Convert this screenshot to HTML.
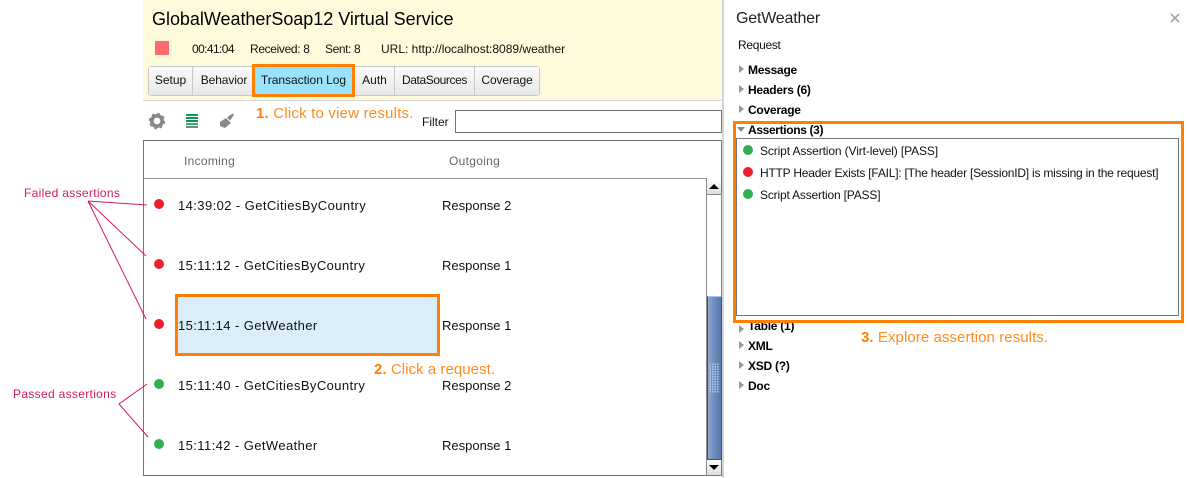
<!DOCTYPE html>
<html><head><meta charset="utf-8">
<style>
html,body{margin:0;padding:0;background:#fff}
#p{position:relative;width:1187px;height:478px;overflow:hidden;background:#fff;font-family:"Liberation Sans",sans-serif;font-size:12px;color:#111}
#p div,#p span.t{position:absolute;white-space:nowrap;box-sizing:border-box}
.t{line-height:16px}
.o{color:#ff8c1f;font-size:15px;line-height:18px}
.o b{color:#ff8000}
.r{font-size:13px;line-height:16px}
.l{letter-spacing:.41px}
.d{width:10px;height:10px;border-radius:50%}
.g{background:#2eb04e}.e{background:#ef2029}
.a{color:#d8195a;font-size:12px;line-height:16px;letter-spacing:.32px}
.h{font-weight:bold;font-size:12px;line-height:16px;color:#000;letter-spacing:-.25px}
.ar{width:0;height:0;border-left:5px solid #999;border-top:4px solid transparent;border-bottom:4px solid transparent}
.tab{top:67px;height:28px;line-height:27px;text-align:center;border-right:1px solid #c8c8c8;background:linear-gradient(#fbfbfb,#e8e8e8);font-size:12px}
</style></head>
<body><div id="p">
<div style="left:143px;top:0;width:579px;height:101px;background:#fefadc;border-bottom:1px solid #d8d8d0"></div>
<div style="left:722px;top:0;width:2px;height:478px;background:#d4d4d4"></div>
<div class="t" style="left:152px;top:8px;font-size:18px;line-height:22px;color:#000;letter-spacing:-.03px">GlobalWeatherSoap12 Virtual Service</div>
<div style="left:155px;top:41px;width:14px;height:14px;background:#ff6b6e"></div>
<div class="t" style="left:192px;top:41px;letter-spacing:-.6px">00:41:04</div>
<div class="t" style="left:250px;top:41px;letter-spacing:-.35px">Received: 8</div>
<div class="t" style="left:325px;top:41px;letter-spacing:-.4px">Sent: 8</div>
<div class="t" style="left:381px;top:41px">URL: http://localhost:8089/weather</div>

<div style="left:148px;top:66px;width:392px;height:30px;border:1px solid #c8c8c8;border-radius:3px;background:#eee"></div>
<div class="tab" style="left:149px;width:44px">Setup</div>
<div class="tab" style="left:194px;width:59px;letter-spacing:-.1px;padding-left:2px">Behavior</div>
<div class="tab" style="left:355px;width:40px">Auth</div>
<div class="tab" style="left:395px;width:80px;letter-spacing:-.4px">DataSources</div>
<div class="tab" style="left:475px;width:64px;border-right:0;letter-spacing:-.1px">Coverage</div>
<div style="left:252px;top:64px;width:103px;height:33px;background:#99e3ff;border:3px solid #ff8000;text-align:center;line-height:26px;font-size:12px;letter-spacing:-.03px">Transaction Log</div>

<svg style="position:absolute;left:148px;top:112px" width="90" height="20" viewBox="0 0 90 20">
<circle cx="9" cy="9" r="5.2" fill="none" stroke="#888" stroke-width="3.6"/>
<circle cx="9" cy="9" r="7" fill="none" stroke="#888" stroke-width="2.4" stroke-dasharray="2.6 2.9"/>
<rect x="38" y="2" width="12" height="2" fill="#0a9a50"/><rect x="38" y="5" width="12" height="2" fill="#0a9a50"/><rect x="38" y="8" width="12" height="2" fill="#0a9a50"/><rect x="38" y="11" width="12" height="2" fill="#5f9a7e"/><rect x="38" y="14" width="12" height="2" fill="#5f9a7e"/>
<path d="M78 6L83 11L77 16L72 14L72 10Z" fill="#888"/><path d="M79 5.5L84.5 1.5L86 3L82 8.5Z" fill="#888"/>
</svg>
<div class="o" style="left:256px;top:105px;letter-spacing:.2px"><b>1.</b> Click to view results.</div>
<div class="t" style="left:422px;top:114px">Filter</div>
<div style="left:455px;top:110px;width:267px;height:23px;border:1px solid #777;background:#fff"></div>

<div style="left:143px;top:140px;width:579px;height:336px;border:1px solid #777;background:#fff"></div>
<div class="t" style="left:184px;top:153px;color:#666;letter-spacing:.3px">Incoming</div>
<div class="t" style="left:449px;top:153px;color:#666;letter-spacing:.3px">Outgoing</div>
<div style="left:144px;top:178px;width:563px;height:1px;background:#999"></div>
<div style="left:706px;top:178px;width:1px;height:297px;background:#888"></div>

<div style="left:707px;top:179px;width:14px;height:15px;background:linear-gradient(#fff,#ddd)"></div>
<div style="left:709px;top:184px;width:0;height:0;border-left:5px solid transparent;border-right:5px solid transparent;border-bottom:5px solid #000"></div>
<div style="left:707px;top:194px;width:15px;height:102px;background:#fff;border-top:1px solid #888;border-right:1px solid #888"></div>
<div style="left:707px;top:296px;width:15px;height:164px;border:1px solid #2f4f9e;border-top-color:#a8c4ee;background:linear-gradient(90deg,#8fa5cb,#6c89b9 55%,#567aae)"></div>
<div style="left:709px;top:363px;width:10px;height:30px;background-image:radial-gradient(circle,#b6c8e8 .7px,transparent .9px);background-size:2.5px 2.5px"></div>
<div style="left:707px;top:460px;width:14px;height:15px;background:linear-gradient(#fff,#ddd)"></div>
<div style="left:709px;top:465px;width:0;height:0;border-left:5px solid transparent;border-right:5px solid transparent;border-top:5px solid #000"></div>

<div style="left:175px;top:294px;width:265px;height:62px;background:#daeef9;border:3px solid #ff8000"></div>

<div class="d e" style="left:154px;top:199px"></div>
<div class="d e" style="left:154px;top:259px"></div>
<div class="d e" style="left:154px;top:319px"></div>
<div class="d g" style="left:154px;top:379px"></div>
<div class="d g" style="left:154px;top:439px"></div>

<div class="r l" style="left:178px;top:198px">14:39:02 - GetCitiesByCountry</div>
<div class="r l" style="left:178px;top:258px">15:11:12 - GetCitiesByCountry</div>
<div class="r l" style="left:178px;top:318px">15:11:14 - GetWeather</div>
<div class="r l" style="left:178px;top:378px">15:11:40 - GetCitiesByCountry</div>
<div class="r l" style="left:178px;top:438px">15:11:42 - GetWeather</div>
<div class="r" style="left:442px;top:198px">Response 2</div>
<div class="r" style="left:442px;top:258px">Response 1</div>
<div class="r" style="left:442px;top:318px">Response 1</div>
<div class="r" style="left:442px;top:378px">Response 2</div>
<div class="r" style="left:442px;top:438px">Response 1</div>
<div class="o" style="left:374px;top:361px;letter-spacing:.05px"><b>2.</b> Click a request.</div>

<svg style="position:absolute;left:0;top:0" width="150" height="478">
<path d="M88 201L147 205M88 201L146 256M88 201L146 319M147 384L119 404L148 437" fill="none" stroke="#d8195a" stroke-width="1"/>
</svg>
<div class="a" style="left:24px;top:185px">Failed assertions</div>
<div class="a" style="left:13px;top:386px">Passed assertions</div>

<div class="t" style="left:736px;top:9px;font-size:16px;line-height:20px;color:#222;letter-spacing:-.2px">GetWeather</div>
<svg style="position:absolute;left:1170px;top:13px" width="10" height="10"><path d="M1 1L9 9M9 1L1 9" stroke="#999" stroke-width="1.5"/></svg>
<div class="t" style="left:738px;top:37px;letter-spacing:-.3px">Request</div>

<div class="ar" style="left:739px;top:65px"></div><div class="h" style="left:748px;top:62px">Message</div>
<div class="ar" style="left:739px;top:85px"></div><div class="h" style="left:748px;top:82px">Headers (6)</div>
<div class="ar" style="left:739px;top:105px"></div><div class="h" style="left:748px;top:102px">Coverage</div>

<div class="ar" style="left:739px;top:325px"></div><div class="h" style="left:748px;top:318px">Table (1)</div>
<div style="left:733px;top:121px;width:451px;height:202px;border:3px solid #ff8000;background:#fff"></div>
<div style="left:737px;top:127px;width:0;height:0;border-left:4px solid transparent;border-right:4px solid transparent;border-top:5px solid #888"></div>
<div class="h" style="left:748px;top:122px;letter-spacing:-.35px">Assertions (3)</div>
<div style="left:736px;top:138px;width:443px;height:178px;border:1px solid #777;background:#fff"></div>
<div class="d g" style="left:743px;top:145px"></div>
<div class="d e" style="left:743px;top:167px"></div>
<div class="d g" style="left:743px;top:189px"></div>
<div class="t" style="left:760px;top:143px;letter-spacing:-.12px">Script Assertion (Virt-level) [PASS]</div>
<div class="t" style="left:760px;top:165px;letter-spacing:-.22px">HTTP Header Exists [FAIL]: [The header [SessionID] is missing in the request]</div>
<div class="t" style="left:760px;top:187px;letter-spacing:-.18px">Script Assertion [PASS]</div>

<div class="o" style="left:861px;top:329px;letter-spacing:.07px"><b>3.</b> Explore assertion results.</div>
<div class="ar" style="left:739px;top:341px"></div><div class="h" style="left:748px;top:338px">XML</div>
<div class="ar" style="left:739px;top:361px"></div><div class="h" style="left:748px;top:358px">XSD (?)</div>
<div class="ar" style="left:739px;top:381px"></div><div class="h" style="left:748px;top:378px">Doc</div>
</div></body></html>
